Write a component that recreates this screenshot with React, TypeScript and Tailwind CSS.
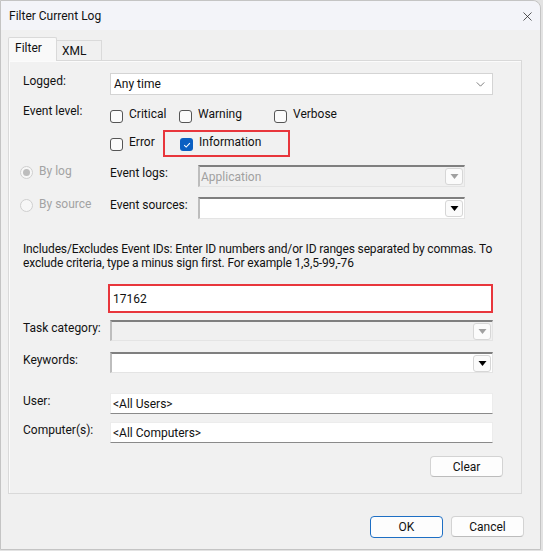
import { X } from "lucide-react";

function CheckBox({ label, checked = false }: { label: string; checked?: boolean }) {
  return (
    <div className="flex items-start">
      <span
        className={
          checked
            ? "mt-[4px] flex h-[13px] w-[13px] items-center justify-center rounded-[3px] bg-[#0a5fc2]"
            : "mt-[4px] h-[13px] w-[13px] rounded-[3px] border border-[#555] bg-[#fbfbfb]"
        }
      >
        {checked && (
          <svg viewBox="0 0 10 10" className="h-[8px] w-[8px]">
            <path d="M1.5 5.2 L4 7.6 L8.6 2.6" fill="none" stroke="#fff" strokeWidth="1.3" />
          </svg>
        )}
      </span>
      <span className="ml-[6px] leading-4">{label}</span>
    </div>
  );
}

function Radio({ label, checked = false }: { label: string; checked?: boolean }) {
  return (
    <div className="flex items-start text-[#a3a3a3]">
      <span className="mt-[3px] flex h-[13px] w-[13px] items-center justify-center rounded-full border border-[#cfcfcf] bg-[#f7f7f7]">
        {checked && <span className="h-[7px] w-[7px] rounded-full bg-[#bdbdbd]" />}
      </span>
      <span className="ml-[6px] leading-4">{label}</span>
    </div>
  );
}

function DropButton({ disabled = false }: { disabled?: boolean }) {
  return (
    <span className="mr-[1px] flex h-[17px] w-[18px] items-center justify-center rounded-[3px] border border-[#d6d6d6] bg-[#fbfbfb]">
      <svg viewBox="0 0 8 5" className="h-[5px] w-[9px]">
        <path d="M0 0 H8 L4 5 Z" fill={disabled ? "#a0a0a0" : "#000"} />
      </svg>
    </span>
  );
}

function SunkenCombo({
  value,
  disabled = false,
  wide = false,
}: {
  value?: string;
  disabled?: boolean;
  wide?: boolean;
}) {
  return (
    <div
      className={
        "flex items-center justify-between border-t-2 border-l-2 border-b border-r border-t-[#7f7f7f] border-l-[#bdbdbd] border-b-[#e4e4e4] border-r-[#e4e4e4] " +
        (wide ? "h-[21px] w-[383px] " : "h-[22px] w-[267px] ") +
        (disabled ? "bg-[#f0f0f0] text-[#a0a0a0]" : "bg-white")
      }
    >
      <span className="pl-[1px] leading-4">{value}</span>
      <DropButton disabled={disabled} />
    </div>
  );
}

function LineInput({ value }: { value: string }) {
  return (
    <div className="flex h-[21px] w-[383px] items-center border border-[#ececec] border-b-[#8a8a8a] bg-white pl-[2px] pt-[1px]">
      {value}
    </div>
  );
}

function WinButton({ label, primary = false }: { label: string; primary?: boolean }) {
  return (
    <button
      type="button"
      className={
        "flex h-[21px] w-[73px] items-center justify-center rounded-[4px] bg-[#fdfdfd] " +
        (primary ? "h-[22px] border border-[#1e6fc4]" : "border border-[#d3d3d3] border-b-[#bcbcbc]")
      }
    >
      {label}
    </button>
  );
}

export default function App() {
  return (
    <div className="h-[551px] w-[543px] bg-[#e3e3e3] text-[12px] text-[#111] [font-family:Roboto,'Liberation_Sans',sans-serif]">
      <div className="flex h-[550px] w-[541px] flex-col rounded-tr-[8px] border border-[#c4c4c4] bg-[#f0f0f0]">
        {/* title bar */}
        <div className="flex h-[29px] items-start justify-between rounded-tr-[8px] bg-[#f3f4f9] pl-[8px] pr-[5px]">
          <span className="mt-[7px] leading-4">Filter Current Log</span>
          <X className="mt-[8px] h-[15px] w-[15px] text-[#222]" strokeWidth={1.2} />
        </div>

        {/* tabs */}
        <div className="mt-[7px] flex items-end pl-[7px]">
          <div className="relative z-10 -mb-px flex h-[24px] w-[49px] items-start rounded-t-[2px] border border-b-0 border-[#d9d9d9] bg-[#f9f9f9] pl-[6px]">
            <span className="mt-[2px] leading-4">Filter</span>
          </div>
          <div className="flex h-[20px] w-[45px] items-start border border-b-0 border-l-0 border-[#dadada] bg-[#f0f0f0] pl-[5px]">
            <span className="mt-[2px] leading-4">XML</span>
          </div>
        </div>

        {/* panel */}
        <div className="ml-[7px] flex h-[434px] w-[514px] flex-col border border-[#d9d9d9] bg-[#f1f1f1] pl-[14px] shadow-[inset_1px_1px_0_#fbfbfb]">
          {/* Logged */}
          <div className="mt-[12px] flex items-start">
            <span className="w-[87px] leading-4">Logged:</span>
            <div className="flex h-[22px] w-[383px] items-center justify-between border border-[#d4d4d4] bg-white pl-[3px] pr-[7px]">
              <span>Any time</span>
              <svg viewBox="0 0 10 6" className="h-[5px] w-[9px]">
                <path d="M0.5 0.5 L5 5 L9.5 0.5" fill="none" stroke="#555" strokeWidth="0.9" />
              </svg>
            </div>
          </div>

          {/* Event level row 1 */}
          <div className="mt-[8px] flex items-start">
            <span className="w-[87px] leading-4">Event level:</span>
            <div className="mt-[3px] flex items-start">
              <div className="w-[69px]">
                <CheckBox label="Critical" />
              </div>
              <div className="w-[95px]">
                <CheckBox label="Warning" />
              </div>
              <CheckBox label="Verbose" />
            </div>
          </div>

          {/* Event level row 2 */}
          <div className="mt-[7px] flex items-start pl-[87px]">
            <div className="mt-[4px] w-[53px]">
              <CheckBox label="Error" />
            </div>
            <div className="h-[27px] w-[127px] border-2 border-[#e8363c] pl-[15px] pt-[2px]">
              <CheckBox label="Information" checked />
            </div>
          </div>

          {/* By log */}
          <div className="mt-[8px] flex items-start">
            <div className="-ml-[3px] -mt-[2px] w-[90px]">
              <Radio label="By log" checked />
            </div>
            <span className="w-[88px] leading-4">Event logs:</span>
            <SunkenCombo value="Application" disabled />
          </div>

          {/* By source */}
          <div className="mt-[10px] flex items-start">
            <div className="-ml-[3px] -mt-[1px] w-[90px]">
              <Radio label="By source" />
            </div>
            <span className="w-[88px] leading-4">Event sources:</span>
            <SunkenCombo />
          </div>

          {/* description */}
          <p className="mt-[23px] leading-[14px] tracking-[-0.14px]">
            Includes/Excludes Event IDs: Enter ID numbers and/or ID ranges separated by commas. To
            <br />
            exclude criteria, type a minus sign first. For example 1,3,5-99,-76
          </p>

          {/* event ids */}
          <div className="ml-[85px] mt-[14px] flex h-[29px] w-[385px] items-center border-2 border-[#e8363c] bg-white pl-[3px]">
            17162
          </div>

          {/* Task category */}
          <div className="mt-[7px] flex items-start">
            <span className="w-[87px] leading-4">Task category:</span>
            <SunkenCombo disabled wide />
          </div>

          {/* Keywords */}
          <div className="mt-[11px] flex items-start">
            <span className="w-[87px] leading-4">Keywords:</span>
            <SunkenCombo wide />
          </div>

          {/* User */}
          <div className="mt-[20px] flex items-start">
            <span className="w-[87px] leading-4">User:</span>
            <LineInput value="<All Users>" />
          </div>

          {/* Computer */}
          <div className="mt-[8px] flex items-start">
            <span className="w-[87px] leading-4">Computer(s):</span>
            <LineInput value="<All Computers>" />
          </div>

          <div className="mt-[13px] flex justify-end pr-[18px]">
            <WinButton label="Clear" />
          </div>
        </div>

        {/* footer */}
        <div className="mt-[22px] flex justify-end gap-[8px] pr-[16px]">
          <WinButton label="OK" primary />
          <WinButton label="Cancel" />
        </div>
      </div>
    </div>
  );
}
